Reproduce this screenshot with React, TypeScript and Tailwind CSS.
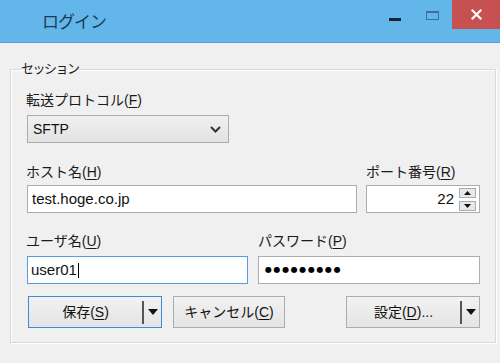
import React from 'react';

const font = { fontFamily: '"Liberation Sans", "Noto Sans CJK JP", sans-serif' };

function Mnemonic({ text, keyChar }: { text: string; keyChar: string }) {
  return (
    <span>
      {text}(<span className="underline underline-offset-2">{keyChar}</span>)
    </span>
  );
}

function Label({ children, className = '' }: { children: React.ReactNode; className?: string }) {
  return <div className={`text-[14px] leading-[18px] text-[#1a1a1a] ${className}`}>{children}</div>;
}

function TitleBar() {
  return (
    <div className="flex h-[43px] bg-[#63b6e9] border-b border-[#52a2d6]">
      <div className="ml-[42px] mt-[11px] text-[17px] leading-[24px] tracking-[-1px] text-[#1d3a56]">ログイン</div>
      <div className="ml-auto flex h-[29px]">
        <div className="w-[34px] pt-[18px] flex justify-center">
          <div className="w-[12px] h-[3px] bg-[#1a2430]" />
        </div>
        <div className="w-[40px] pt-[11px] flex justify-center">
          <div className="w-[13px] h-[9px] border border-t-2 border-[#3d6f9a]" />
        </div>
        <div className="w-[48px] bg-[#c75050] flex items-center justify-center">
          <svg width="11" height="11" viewBox="0 0 11 11">
            <path d="M1.5 1.5 L9.5 9.5 M9.5 1.5 L1.5 9.5" stroke="#fff" strokeWidth="2.2" strokeLinecap="square" />
          </svg>
        </div>
      </div>
    </div>
  );
}

function DropArrow() {
  return (
    <svg width="10" height="6" viewBox="0 0 10 6">
      <path d="M0 0 H10 L5 6 Z" fill="#111" />
    </svg>
  );
}

export default function App() {
  return (
    <div className="w-[500px] h-[363px] bg-[#f0f0f0] overflow-hidden" style={font}>
      <TitleBar />
      <div className="px-[10px] pt-[17px]">
        <fieldset className="w-[486px] border border-[#d9d9d9] pl-[10px] pr-[14px] pb-[14px] shadow-[inset_1px_1px_0_#fff,1px_1px_0_#fff]">
          <legend className="text-[13px] leading-[18px] tracking-[-1.5px] text-[#1a1a1a] px-0">セッション</legend>
          <div className="pl-[5px]">
            <Label className="mt-[13px]">
              <Mnemonic text="転送プロトコル" keyChar="F" />
            </Label>
            <div className="mt-[6px] ml-[1px] w-[202px] h-[28px] border border-[#acacac] bg-gradient-to-b from-[#f0f0f0] to-[#e3e3e3] flex items-center pl-[5px] pr-[7px]">
              <span className="text-[14px] text-[#111]">SFTP</span>
              <svg className="ml-auto" width="11" height="7" viewBox="0 0 11 7">
                <path d="M1 1 L5.5 5.5 L10 1" stroke="#333" strokeWidth="2" fill="none" />
              </svg>
            </div>

            <div className="mt-[20px] flex gap-[9px]">
              <div className="w-[331px]">
                <Label>
                  <Mnemonic text="ホスト名" keyChar="H" />
                </Label>
                <div className="mt-[4px] ml-[1px] h-[28px] border border-[#abadb3] bg-white flex items-center pl-[4px] text-[15px] text-[#111]">
                  test.hoge.co.jp
                </div>
              </div>
              <div className="w-[114px]">
                <Label>
                  <Mnemonic text="ポート番号" keyChar="R" />
                </Label>
                <div className="mt-[4px] h-[28px] border border-[#abadb3] bg-white flex items-center text-[15px] text-[#111]">
                  <span className="ml-auto">22</span>
                  <div className="ml-[5px] mr-[3px] flex flex-col gap-[3px]">
                    <div className="w-[17px] h-[10px] border border-[#acacac] bg-[#e8e8e8] flex items-center justify-center">
                      <svg width="7" height="4" viewBox="0 0 7 4">
                        <path d="M0 4 H7 L3.5 0 Z" fill="#111" />
                      </svg>
                    </div>
                    <div className="w-[17px] h-[10px] border border-[#acacac] bg-[#e8e8e8] flex items-center justify-center">
                      <svg width="7" height="4" viewBox="0 0 7 4">
                        <path d="M0 0 H7 L3.5 4 Z" fill="#111" />
                      </svg>
                    </div>
                  </div>
                </div>
              </div>
            </div>

            <div className="mt-[19px] flex gap-[10px]">
              <div className="w-[222px]">
                <Label>
                  <Mnemonic text="ユーザ名" keyChar="U" />
                </Label>
                <div className="mt-[6px] ml-[1px] h-[28px] border border-[#569de5] bg-white flex items-center pl-[3px] text-[15px] text-[#111]">
                  user01
                  <span className="ml-[1px] w-[1px] h-[15px] bg-black" />
                </div>
              </div>
              <div className="w-[222px]">
                <Label>
                  <Mnemonic text="パスワード" keyChar="P" />
                </Label>
                <div className="mt-[6px] h-[28px] border border-[#abadb3] bg-white flex items-center pl-[6px] text-[8px] tracking-[1.6px] text-black" style={{ fontFamily: '"DejaVu Sans", sans-serif' }}>
                  ●●●●●●●●●
                </div>
              </div>
            </div>

            <div className="mt-[12px] ml-[2px] w-[452px] flex text-[14px] text-[#111]">
              <div className="w-[134px] h-[32px] border border-[#3c8ad8] bg-gradient-to-b from-[#f2f2f2] to-[#e4e4e4] flex items-center">
                <div className="flex-1 text-center">
                  <Mnemonic text="保存" keyChar="S" />
                </div>
                <div className="w-[2px] h-[23px] bg-[#555]" />
                <div className="w-[17px] flex justify-center pl-[1px]">
                  <DropArrow />
                </div>
              </div>
              <div className="ml-[11px] w-[112px] h-[32px] border border-[#acacac] bg-gradient-to-b from-[#f2f2f2] to-[#e4e4e4] flex items-center justify-center">
                <Mnemonic text="キャンセル" keyChar="C" />
              </div>
              <div className="ml-auto w-[134px] h-[32px] border border-[#acacac] bg-gradient-to-b from-[#f2f2f2] to-[#e4e4e4] flex items-center">
                <div className="flex-1 text-center">
                  <Mnemonic text="設定" keyChar="D" />
                  ...
                </div>
                <div className="w-[2px] h-[23px] bg-[#555]" />
                <div className="w-[17px] flex justify-center pl-[1px]">
                  <DropArrow />
                </div>
              </div>
            </div>
          </div>
        </fieldset>
      </div>
    </div>
  );
}
